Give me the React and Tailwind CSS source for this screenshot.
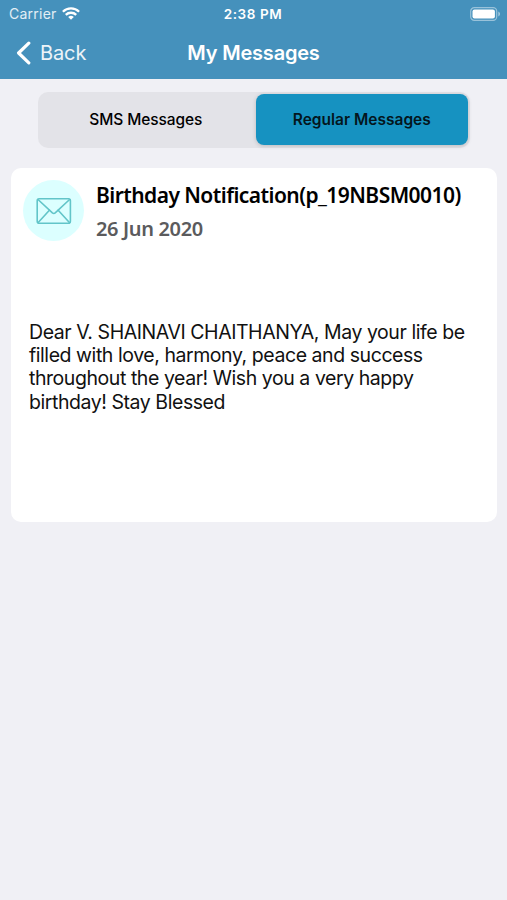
const WifiIcon = () => (
    <svg viewBox="0 0 18 13" className="w-[18px] h-[13px]" fill="none" stroke="#fff" strokeWidth="2.3">
        <path d="M0.9 4.7a11.6 11.6 0 0 1 16.2 0" />
        <path d="M3.8 7.9a7.4 7.4 0 0 1 10.4 0" />
        <path d="M9 12.8 6.2 10a4 4 0 0 1 5.6 0z" fill="#fff" stroke="none" />
    </svg>
)

const BatteryIcon = () => (
    <svg viewBox="0 0 31 14" className="w-[31px] h-[14px]">
        <rect x="0.7" y="0.7" width="26" height="12.6" rx="3.6" fill="none" stroke="#fff" strokeOpacity="0.45" strokeWidth="1.2" />
        <rect x="2.5" y="2.5" width="22.4" height="9" rx="2" fill="#fff" />
        <path d="M28.3 4.6v4.8c1-.4 1.7-1.3 1.7-2.4s-.7-2-1.7-2.4z" fill="#fff" fillOpacity="0.5" />
    </svg>
)

const EnvelopeIcon = () => (
    <svg
        viewBox="0 0 36 28"
        className="w-9 h-7"
        fill="none"
        stroke="#62c5c9"
        strokeWidth="1.6"
        strokeLinecap="round"
        strokeLinejoin="round"
    >
        <rect x="1.2" y="1.7" width="33.2" height="24.6" rx="2" />
        <path d="M2 2.5 16.4 15.9q1.4 1.2 2.8 0L33.6 2.5" />
        <path d="M2.2 25.5 13.4 13.2M33.4 25.5 22.2 13.2" />
    </svg>
)

const tabs = [
    { name: 'SMS Messages', active: false },
    { name: 'Regular Messages', active: true },
]

const App = () => {
    return (
        <div className="min-h-screen bg-[#f0f0f5] font-['Inter',sans-serif] text-black">
            {/* Header */}
            <header className="h-[79px] bg-[#4591bc] text-white">
                <div className="grid grid-cols-[1fr_auto_1fr] items-center h-[27px] pl-[9px] pr-1.5">
                    <div className="flex items-center gap-[5px]">
                        <span className="text-[14px] tracking-[0.25px] text-white/85">Carrier</span>
                        <WifiIcon />
                    </div>
                    <span className="-ml-1 mt-px text-[13.5px] font-semibold tracking-[0.6px]">2:38 PM</span>
                    <div className="flex justify-end">
                        <BatteryIcon />
                    </div>
                </div>
                <div className="grid grid-cols-[1fr_auto_1fr] items-center h-[51px] px-4">
                    <button className="flex items-center gap-[9px] text-[20px] tracking-[-0.1px] text-white/90">
                        <svg viewBox="0 0 15 24" className="w-[15px] h-6" fill="none" stroke="#fff" strokeWidth="3.2" strokeLinecap="round" strokeLinejoin="round">
                            <path d="M12.8 2.2 2.6 12l10.2 9.8" />
                        </svg>
                        Back
                    </button>
                    <h1 className="text-[20px] font-semibold tracking-[-0.2px]">My Messages</h1>
                </div>
            </header>

            {/* Message type switch */}
            <div className="flex justify-between mt-[12.5px] ml-[38px] w-[431.5px] h-14 p-0.5 rounded-[10px] bg-[#e3e3e8]">
                {tabs.map((tab) => (
                    <button
                        key={tab.name}
                        className={`w-[211.5px] h-[51.5px] rounded-lg text-[15.5px] ${tab.active
                            ? 'bg-[#1692c1] font-semibold shadow-[0_1px_4px_rgba(0,0,0,0.18)] text-[#04161d]'
                            : 'font-medium tracking-[-0.1px]'
                            }`}
                    >
                        {tab.name}
                    </button>
                ))}
            </div>

            {/* Message card */}
            <article className="mt-[20.5px] ml-[11px] w-[486px] h-[354px] rounded-[10px] bg-white">
                <div className="flex gap-3 pt-3 pl-3">
                    <div className="flex items-center justify-center w-[61px] h-[61px] rounded-full bg-[#dcffff]">
                        <EnvelopeIcon />
                    </div>
                    <div className="font-['Noto_Sans',sans-serif] font-semibold whitespace-nowrap">
                        <h2 className="text-[21px] leading-[30px] tracking-[-0.55px] text-black">Birthday Notification(p_19NBSM0010)</h2>
                        <p className="mt-1 text-[20px] leading-[30px] tracking-[-0.35px] text-[#5b5b5d]">26 Jun 2020</p>
                    </div>
                </div>
                <p className="mt-[76.5px] ml-[18px] text-[19.5px] leading-[23.4px] tracking-[-0.44px] text-[#111]">
                    Dear V. SHAINAVI CHAITHANYA, May your life be<br />
                    filled with love, harmony, peace and success<br />
                    throughout the year! Wish you a very happy<br />
                    birthday! Stay Blessed
                </p>
            </article>
        </div>
    )
}

export default App
